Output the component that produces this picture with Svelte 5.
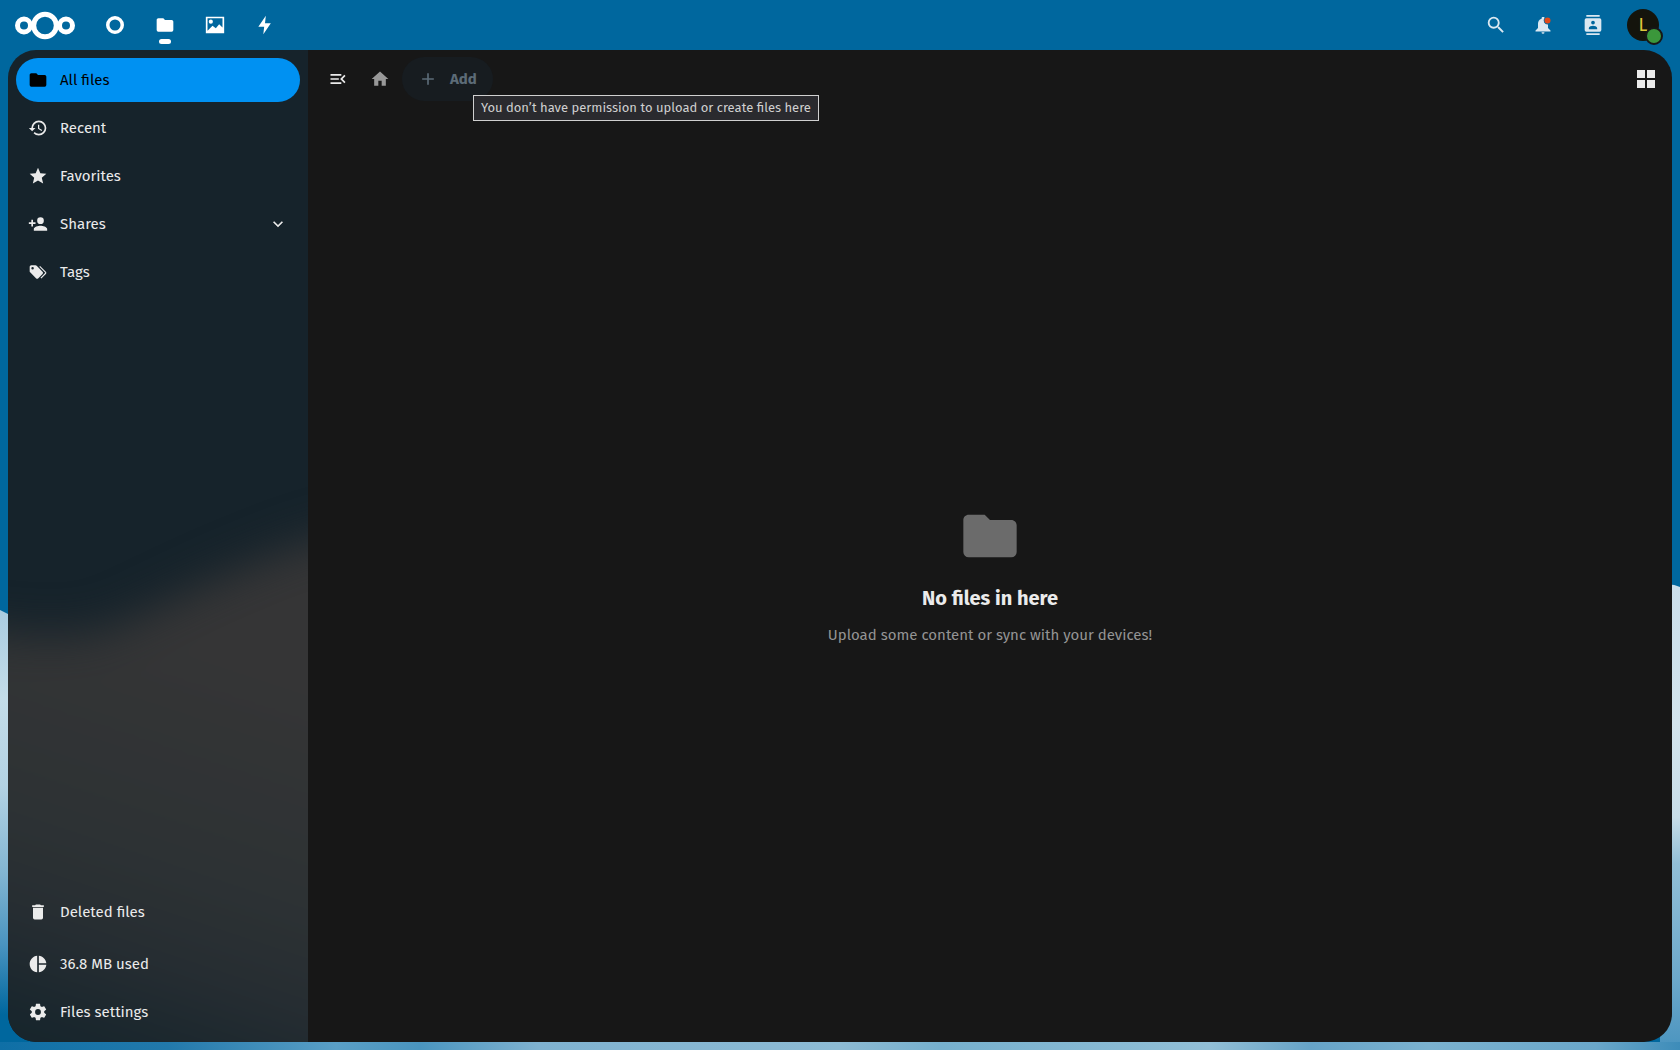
<script lang="ts">
	const folder = 'M10 4H4c-1.11 0-2 .89-2 2v12a2 2 0 0 0 2 2h16a2 2 0 0 0 2-2V8c0-1.11-.9-2-2-2h-8l-2-2z';

	const apps = [
		{ name: 'Dashboard', path: 'M12 1.2a10.8 10.8 0 1 0 0 21.6 10.8 10.8 0 0 0 0-21.6zm0 4.2a6.6 6.6 0 1 1 0 13.2 6.6 6.6 0 0 1 0-13.2z' },
		{ name: 'Files', path: folder, active: true },
		{ name: 'Photos', path: 'M1 2v20h22V2zm2 2h18v11l-4-4-4 5-4-3-6 6zm4 1.5a2.5 2.5 0 1 0 0 5 2.5 2.5 0 0 0 0-5z' },
		{ name: 'Activity', path: 'M13 1L4 14h7l-1 9 9-13h-7z' }
	];

	const views = [
		{ name: 'All files', path: folder, active: true },
		{
			name: 'Recent',
			path: 'M13.5 8H12v5l4.28 2.54.72-1.21-3.5-2.08V8M13 3a9 9 0 0 0-9 9H1l3.96 4.03L9 12H6a7 7 0 0 1 7-7 7 7 0 0 1 7 7 7 7 0 0 1-7 7c-1.93 0-3.68-.79-4.94-2.06l-1.42 1.42A8.9 8.9 0 0 0 13 21a9 9 0 0 0 9-9 9 9 0 0 0-9-9'
		},
		{
			name: 'Favorites',
			path: 'M12 17.27L18.18 21l-1.64-7.03L22 9.24l-7.19-.62L12 2 9.19 8.62 2 9.24l5.45 4.73L5.82 21z'
		},
		{
			name: 'Shares',
			path: 'M15 14c-2.67 0-8 1.33-8 4v2h16v-2c0-2.67-5.33-4-8-4m-9-4V7H4v3H1v2h3v3h2v-3h3v-2m6 2a4 4 0 0 0 4-4 4 4 0 0 0-4-4 4 4 0 0 0-4 4 4 4 0 0 0 4 4z',
			expandable: true
		},
		{
			name: 'Tags',
			path: 'M5.5 9A1.5 1.5 0 0 0 7 7.5 1.5 1.5 0 0 0 5.5 6 1.5 1.5 0 0 0 4 7.5 1.5 1.5 0 0 0 5.5 9m11.91 2.58c.36.36.59.86.59 1.42 0 .55-.22 1.05-.59 1.41l-5 5a1.996 1.996 0 0 1-2.83 0l-6.99-6.99C2.22 12.05 2 11.55 2 11V6c0-1.11.89-2 2-2h5c.55 0 1.05.22 1.41.58l7 7m-3.87-5.87l1-1 6.87 6.87c.37.36.59.87.59 1.42s-.22 1.05-.58 1.41l-5.38 5.38-1-1L20.75 13l-7.21-7.29z'
		}
	];

	const footer = [
		{ name: 'Deleted files', path: 'M19 4h-3.5l-1-1h-5l-1 1H5v2h14M6 19a2 2 0 0 0 2 2h8a2 2 0 0 0 2-2V7H6v12z' },
		{ name: '36.8 MB used', path: 'M11 2v20c-5.07-.5-9-4.79-9-10s3.93-9.5 9-10m2.03 0v8.99H22c-.47-4.74-4.24-8.52-8.97-8.99m0 11.01V22c4.74-.47 8.5-4.25 8.97-8.99z' },
		{
			name: 'Files settings',
			path: 'M12 15.5A3.5 3.5 0 0 1 8.5 12 3.5 3.5 0 0 1 12 8.5a3.5 3.5 0 0 1 3.5 3.5 3.5 3.5 0 0 1-3.5 3.5m7.43-2.53c.04-.32.07-.64.07-.97 0-.33-.03-.66-.07-1l2.11-1.63c.19-.15.24-.42.12-.64l-2-3.46c-.12-.22-.39-.31-.61-.22l-2.49 1c-.52-.39-1.06-.73-1.69-.98l-.37-2.65A.506.506 0 0 0 14 2h-4c-.25 0-.46.18-.5.42l-.37 2.65c-.63.25-1.17.59-1.69.98l-2.49-1c-.22-.09-.49 0-.61.22l-2 3.46c-.13.22-.07.49.12.64L4.57 11c-.04.34-.07.67-.07 1 0 .33.03.65.07.97l-2.11 1.66c-.19.15-.25.42-.12.64l2 3.46c.12.22.39.3.61.22l2.49-1.01c.52.4 1.06.74 1.69.99l.37 2.65c.04.24.25.42.5.42h4c.25 0 .46-.18.5-.42l.37-2.65c.63-.26 1.17-.59 1.69-.99l2.49 1.01c.22.08.49 0 .61-.22l2-3.46c.12-.22.07-.49-.12-.64z'
		}
	];
</script>

{#snippet icon(path: string, size = 20)}
	<svg width={size} height={size} viewBox="0 0 24 24" fill="currentColor" fill-rule="evenodd" aria-hidden="true">
		<path d={path} />
	</svg>
{/snippet}

<div class="page">
	<svg class="backdrop" viewBox="0 0 1680 1050" preserveAspectRatio="none" aria-hidden="true">
		<defs>
			<linearGradient id="cloud-left" x1="0" y1="610" x2="0" y2="1050" gradientUnits="userSpaceOnUse">
				<stop offset="0" stop-color="#a9cbe0" />
				<stop offset="0.2" stop-color="#c4dde9" />
				<stop offset="0.4" stop-color="#b3d2e3" />
				<stop offset="0.6" stop-color="#82b5d2" />
				<stop offset="0.76" stop-color="#4a94c0" />
				<stop offset="0.92" stop-color="#00679e" />
			</linearGradient>
			<linearGradient id="cloud-right" x1="0" y1="584" x2="0" y2="1050" gradientUnits="userSpaceOnUse">
				<stop offset="0" stop-color="#cbdfeb" />
				<stop offset="0.3" stop-color="#d3e4ed" />
				<stop offset="0.5" stop-color="#c8dde8" />
				<stop offset="0.6" stop-color="#92bfd7" />
				<stop offset="0.85" stop-color="#6ca8cb" />
				<stop offset="1" stop-color="#4a94bf" />
			</linearGradient>
			<linearGradient id="cloud-floor" x1="0" x2="1">
				<stop offset="0" stop-color="#0f6fa6" />
				<stop offset="0.1" stop-color="#2279ab" />
				<stop offset="0.2" stop-color="#5a9fc6" />
				<stop offset="0.25" stop-color="#4a95bf" />
				<stop offset="0.32" stop-color="#7fb2d0" />
				<stop offset="0.5" stop-color="#8dbbd4" />
				<stop offset="0.56" stop-color="#76b0cd" />
				<stop offset="0.72" stop-color="#92bfd6" />
				<stop offset="0.78" stop-color="#66a3c7" />
				<stop offset="0.85" stop-color="#7bb2cf" />
				<stop offset="0.95" stop-color="#6aa7ca" />
				<stop offset="1" stop-color="#3d8cb9" />
			</linearGradient>
		</defs>
		<path fill="url(#cloud-left)" d="M0 610Q6 613 10 615V1050H0z" />
		<path fill="url(#cloud-right)" d="M1680 587Q1672 583 1660 585V1050H1680z" />
		<path fill="url(#cloud-floor)" d="M0 1042H1680V1050H0z" />
	</svg>

	<header>
		<a class="logo" href="#home" aria-label="Nextcloud">
			<svg width="62" height="30" viewBox="0 0 62 30" fill="none" stroke="#fff" stroke-width="5" aria-hidden="true">
				<circle cx="10" cy="15.5" r="6.5" />
				<circle cx="31" cy="15.5" r="11.3" />
				<circle cx="52" cy="15.5" r="6.5" />
			</svg>
		</a>
		<nav class="apps" aria-label="Apps">
			{#each apps as app}
				<a href="#{app.name.toLowerCase()}" class:active={app.active} aria-label={app.name}>
					{@render icon(app.path)}
				</a>
			{/each}
		</nav>
		<div class="tools">
			<button class="search" aria-label="Search">
				{@render icon('M9.5 3A6.5 6.5 0 0 1 16 9.5c0 1.61-.59 3.09-1.56 4.23l.27.27h.79l5 5-1.5 1.5-5-5v-.79l-.27-.27A6.516 6.516 0 0 1 9.5 16 6.5 6.5 0 0 1 3 9.5 6.5 6.5 0 0 1 9.5 3m0 2C7 5 5 7 5 9.5S7 14 9.5 14 14 12 14 9.5 12 5 9.5 5z', 22)}
			</button>
			<button aria-label="Notifications">
				<svg width="20" height="20" viewBox="0 0 20 20" aria-hidden="true">
					<path fill="currentColor" d="M10 2c-.8 0-1.4.5-1.4 1.3v.4C6 4.5 5 6.7 5 9v4l-2.5 2.5v1h15v-1L15 13V9.5A4 4 0 0 1 11.3 3.2L11.4 2zM8.5 17.3h3a1.5 1.5 0 0 1-3 0z" />
					<circle cx="14.5" cy="5.5" r="3" fill="#e04a1a" />
				</svg>
			</button>
			<button aria-label="Contacts">
				{@render icon('M20 0H4v2h16V0M4 24h16v-2H4v2M20 4H4a2 2 0 0 0-2 2v12a2 2 0 0 0 2 2h16a2 2 0 0 0 2-2V6a2 2 0 0 0-2-2m-8 2.75A2.25 2.25 0 0 1 14.25 9 2.25 2.25 0 0 1 12 11.25 2.25 2.25 0 0 1 9.75 9 2.25 2.25 0 0 1 12 6.75M17 17H7v-1.5c0-1.67 3.33-2.5 5-2.5s5 .83 5 2.5V17z')}
			</button>
			<button aria-label="Account menu">
				<span class="avatar">L<span class="status"></span></span>
			</button>
		</div>
	</header>

	<div class="content">
		<aside>
			<svg class="backdrop" viewBox="0 0 300 992" preserveAspectRatio="none" aria-hidden="true">
				<defs>
					<linearGradient id="haze" x1="190" y1="600" x2="60" y2="992" gradientUnits="userSpaceOnUse">
						<stop offset="0" stop-color="#353536" />
						<stop offset="0.5" stop-color="#2d3234" />
						<stop offset="0.75" stop-color="#262d32" />
						<stop offset="1" stop-color="#17252c" />
					</linearGradient>
					<filter id="soften" x="-30%" y="-30%" width="160%" height="160%" color-interpolation-filters="sRGB">
						<feGaussianBlur stdDeviation="22" />
					</filter>
				</defs>
				<path fill="url(#haze)" filter="url(#soften)" d="M-90 570C0 584 60 592 100 578S190 532 300 492L390 467V1090H-90z" />
			</svg>
			<ul>
				{#each views as view}
					<li>
						<a href="#view" class:active={view.active}>
							{@render icon(view.path)}
							<span>{view.name}</span>
							{#if view.expandable}
								{@render icon('M7.41 8.58L12 13.17l4.59-4.59L18 10l-6 6-6-6 1.41-1.42z')}
							{/if}
						</a>
					</li>
				{/each}
			</ul>
			<ul class="footer">
				{#each footer as entry}
					<li>
						<a href="#view">
							{@render icon(entry.path)}
							<span>{entry.name}</span>
						</a>
					</li>
				{/each}
			</ul>
		</aside>

		<main>
			<div class="toolbar">
				<button class="toggle" aria-label="Close navigation">
					{@render icon('M21 15.61L19.59 17l-5.01-5 5.01-5L21 8.39 17.44 12 21 15.61M3 6h13v2H3V6m0 7v-2h10v2H3m0 5v-2h13v2H3z')}
				</button>
				<a class="home" href="#home" aria-label="All files">
					{@render icon('M10 20v-6h4v6h5v-8h3L12 3 2 12h3v8h5z')}
				</a>
				<div class="add-wrap">
					<button class="add" disabled>
						{@render icon('M19 13h-6v6h-2v-6H5v-2h6V5h2v6h6v2z')}
						Add
					</button>
					<div class="tooltip" role="tooltip">You don’t have permission to upload or create files here</div>
				</div>
				<button class="grid" aria-label="Switch to grid view">
					{@render icon('M3 3h8v8H3zM13 3h8v8h-8zM3 13h8v8H3zM13 13h8v8h-8z', 24)}
				</button>
			</div>
			<div class="empty">
				{@render icon(folder, 64)}
				<h2>No files in here</h2>
				<p>Upload some content or sync with your devices!</p>
			</div>
		</main>
	</div>
</div>

<style>
	:global(body) {
		margin: 0;
	}

	.page {
		position: relative;
		display: flex;
		flex-direction: column;
		height: 100vh;
		background: #00679e;
		color: #ebebeb;
		font: 15px/24px 'Fira Sans', 'Noto Sans', sans-serif;
	}

	.backdrop {
		position: absolute;
		inset: 0;
		width: 100%;
		height: 100%;
	}

	svg {
		display: block;
		flex-shrink: 0;
	}

	a {
		color: inherit;
		text-decoration: none;
	}

	button {
		padding: 0;
		border: 0;
		background: none;
		color: inherit;
		font: inherit;
		cursor: pointer;
	}

	header {
		position: relative;
		display: flex;
		height: 50px;
		padding: 0 12px 0 14px;
		color: #fff;
	}

	.logo {
		display: flex;
		align-items: center;
		margin-right: 14px;
	}

	.apps,
	.tools {
		display: flex;
	}

	.apps a,
	.tools button {
		position: relative;
		display: flex;
		align-items: center;
		justify-content: center;
		width: 50px;
	}

	.apps .active::after {
		content: '';
		position: absolute;
		bottom: 6px;
		width: 12px;
		height: 5px;
		border-radius: 3px;
		background: #fff;
	}

	.tools {
		margin-left: auto;
		color: #dbe8f1;
	}

	.tools .search {
		width: 44px;
	}

	.avatar {
		position: relative;
		width: 32px;
		height: 32px;
		border-radius: 50%;
		background: #14140c;
		color: #e0c63c;
		font-size: 18px;
		line-height: 32px;
	}

	.status {
		position: absolute;
		right: -4px;
		bottom: -4px;
		width: 14px;
		height: 14px;
		border: 2px solid #171717;
		border-radius: 50%;
		background: #3b973b;
	}

	.content {
		position: relative;
		flex: 1;
		display: flex;
		min-height: 0;
		margin: 0 8px 8px;
		border-radius: 28px;
		overflow: hidden;
	}

	aside {
		position: relative;
		display: flex;
		flex-direction: column;
		justify-content: space-between;
		box-sizing: border-box;
		width: 300px;
		padding: 8px;
		background: #16232b;
	}

	ul {
		position: relative;
		display: flex;
		flex-direction: column;
		gap: 4px;
		margin: 0;
		padding: 0;
		list-style: none;
	}

	aside a {
		display: flex;
		align-items: center;
		gap: 12px;
		height: 44px;
		padding: 0 12px;
		border-radius: 22px;
	}

	aside a span {
		flex: 1;
	}

	aside .active {
		background: #0091f2;
		color: #000;
	}

	.footer li:first-child {
		margin-bottom: 4px;
	}

	main {
		position: relative;
		flex: 1;
		display: flex;
		flex-direction: column;
		background: #171717;
	}

	.toolbar {
		display: flex;
		align-items: center;
		padding: 7px 14px 0 8px;
	}

	.toggle,
	.home,
	.grid {
		display: flex;
		align-items: center;
		justify-content: center;
		width: 44px;
		height: 44px;
	}

	.home {
		width: 40px;
		color: #999;
	}

	.add-wrap {
		position: relative;
		margin-left: 2px;
	}

	.add {
		display: flex;
		align-items: center;
		gap: 12px;
		height: 44px;
		padding: 0 16px;
		border-radius: 22px;
		background: #171c20;
		color: #5c6b77;
		font-weight: 700;
	}

	.tooltip {
		position: absolute;
		top: 38px;
		left: 71px;
		padding: 0 7px;
		border: 1px solid #d0d0d0;
		background: #2a2a2e;
		color: #d0d0d0;
		font-size: 13px;
		white-space: nowrap;
	}

	.grid {
		width: 24px;
		margin-left: auto;
	}

	.empty {
		flex: 1;
		display: flex;
		flex-direction: column;
		align-items: center;
		justify-content: center;
		padding-top: 7px;
	}

	.empty svg {
		color: #6b6b6b;
	}

	h2 {
		margin: 15px 0 10px;
		font-size: 20px;
		line-height: 30px;
	}

	p {
		margin: 0;
		color: #949494;
	}
</style>
